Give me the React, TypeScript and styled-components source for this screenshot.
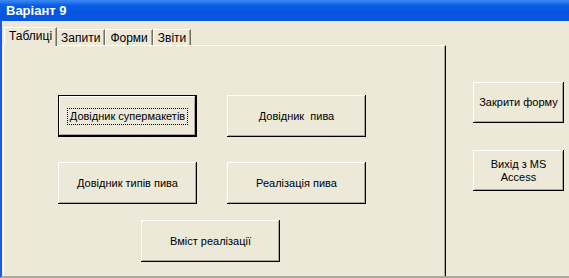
import React from "react";
import styled, { createGlobalStyle, css } from "styled-components";

const Global = createGlobalStyle`
  html, body { margin: 0; padding: 0; background: #ece9d8; overflow: hidden; }
  * { box-sizing: border-box; }
`;

const Window = styled.div`
  width: 569px;
  height: 278px;
  display: flex;
  flex-direction: column;
  background: #ece9d8;
  font-family: "Liberation Sans", Arial, sans-serif;
`;

const TitleBar = styled.div`
  height: 21px;
  flex: none;
  display: flex;
  align-items: center;
  padding-left: 6px;
  background: linear-gradient(180deg, #3d8bf5 0%, #0a5ee8 25%, #0454e0 60%, #0a57dc 100%);
  color: #fff;
  font-weight: bold;
  font-size: 13px;
`;

const Frame = styled.div`
  flex: 1;
  display: flex;
  border-left: 2px solid #1a5be6;
  border-bottom: 2px solid #aca899;
  min-height: 0;
`;

const LeftArea = styled.div`
  width: 444px;
  display: flex;
  flex-direction: column;
  padding: 5px 0 0 1px;
`;

const TabStrip = styled.div`
  display: flex;
  align-items: flex-end;
  height: 19px;
  padding-left: 1px;
  position: relative;
  z-index: 1;
`;

const Tab = styled.div<{ $active?: boolean }>`
  font-size: 12px;
  color: #000;
  background: #ece9d8;
  border-top: 1px solid #fff;
  border-left: 1px solid #fff;
  border-right: 1px solid #716f64;
  box-shadow: inset -1px 0 0 #aca899;
  height: 16px;
  padding: 1px 4px 0 4px;
  ${(p) =>
    p.$active &&
    css`
      height: 19px;
      margin-right: -1px;
      padding: 1px 4px 0 4px;
      margin-bottom: -1px;
      position: relative;
      z-index: 2;
    `}
`;

const Panel = styled.div`
  flex: 1;
  border-top: 1px solid #fff;
  border-left: 1px solid #fff;
  border-right: 1px solid #000;
  box-shadow: inset -1px 0 0 #aca899;
  display: flex;
  flex-direction: column;
  align-items: flex-start;
  padding: 49px 0 0 54px;
`;

const Row = styled.div<{ $gap: number; $top?: number; $shift?: number }>`
  display: flex;
  gap: ${(p) => p.$gap}px;
  margin-top: ${(p) => p.$top ?? 0}px;
  margin-left: ${(p) => p.$shift ?? 0}px;
`;

const Button = styled.div<{ $default?: boolean; $w?: number; $h?: number }>`
  width: ${(p) => p.$w ?? 139}px;
  height: ${(p) => p.$h ?? 42}px;
  display: flex;
  align-items: center;
  justify-content: center;
  text-align: center;
  font-size: 11px;
  line-height: 13px;
  color: #000;
  background: #ece9d8;
  box-shadow: inset -1px -1px 0 #000, inset 1px 1px 0 #fff, inset -2px -2px 0 #aca899;
  ${(p) =>
    p.$default &&
    css`
      border: 1px solid #000;
    `}
`;

const Focus = styled.span`
  outline: 1px dotted #000;
  outline-offset: 1px;
  padding: 0 1px;
`;

const RightArea = styled.div`
  flex: 1;
  display: flex;
  flex-direction: column;
  align-items: flex-start;
  padding: 61px 0 0 27px;
  gap: 27px;
`;

export default function App() {
  return (
    <>
      <Global />
      <Window>
        <TitleBar>Варіант 9</TitleBar>
        <Frame>
          <LeftArea>
            <TabStrip>
              <Tab $active>Таблиці</Tab>
              <Tab>Запити</Tab>
              <Tab>Форми</Tab>
              <Tab>Звіти</Tab>
            </TabStrip>
            <Panel>
              <Row $gap={30}>
                <Button $default>
                  <Focus>Довідник супермакетів</Focus>
                </Button>
                <Button>Довідник&nbsp; пива</Button>
              </Row>
              <Row $gap={30} $top={25}>
                <Button>Довідник типів пива</Button>
                <Button>Реалізація пива</Button>
              </Row>
              <Row $gap={0} $top={16} $shift={83}>
                <Button>Вміст реалізації</Button>
              </Row>
            </Panel>
          </LeftArea>
          <RightArea>
            <Button $w={91} $h={41}>Закрити форму</Button>
            <Button $w={91} $h={41}>
              Вихід з MS
              <br />
              Access
            </Button>
          </RightArea>
        </Frame>
      </Window>
    </>
  );
}
